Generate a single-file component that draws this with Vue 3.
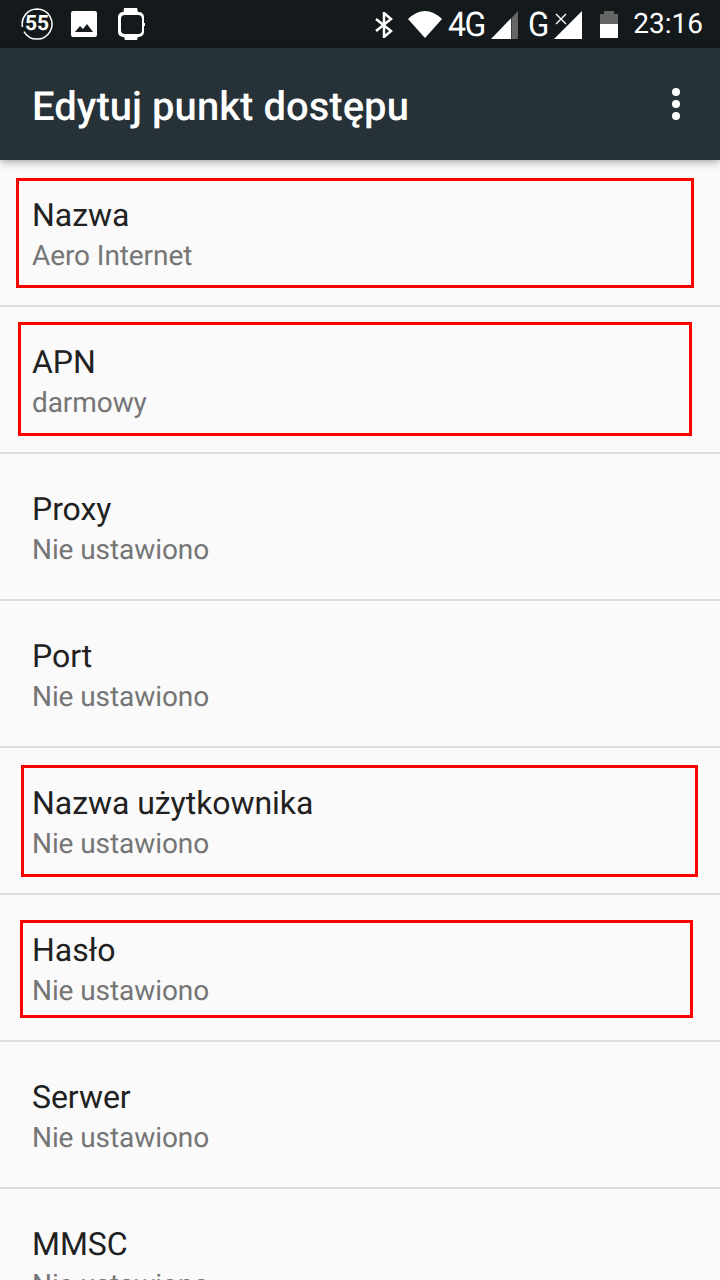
<template>
  <div class="phone">
    <div class="status-bar">
      <div class="status-left">
        <div class="badge-55">
          <svg class="ring" viewBox="0 0 32 32" width="32" height="32">
            <path fill="none" stroke="#fff" stroke-width="1.500" d="M16 1a15 15 0 1 1-13 22.500M1.500 19A15 15 0 0 1 16 1" />
          </svg>
          <span>55</span>
        </div>
        <svg class="ic-pic" viewBox="0 0 26 26" width="26" height="26">
          <path fill="#fff" fill-rule="evenodd" d="M2 0h22a2 2 0 0 1 2 2v22a2 2 0 0 1-2 2H2a2 2 0 0 1-2-2V2a2 2 0 0 1 2-2zM4 21h18l-6-8-4 5-3-3z" />
        </svg>
        <svg class="ic-watch" viewBox="0 0 28 32" width="28" height="32">
          <path fill="#fff" d="M7 0h13l1 4h1a5 5 0 0 1 5 5v6h1v3h-1v6a5 5 0 0 1-5 5h-1l-1 3H8l-1-3H6a5 5 0 0 1-5-5V9a5 5 0 0 1 5-5h.500z" transform="translate(-1 0)" />
          <rect x="3" y="7" width="21" height="19" rx="4" fill="#14191c" />
        </svg>
      </div>
      <div class="status-right">
        <svg class="ic-bt" viewBox="0 0 18 26" width="18" height="26">
          <path fill="none" stroke="#fff" stroke-width="2.500" d="M1 7l15 12-7 6V1l7 6L1 19" />
        </svg>
        <svg class="ic-wifi" viewBox="0 0 34 27" width="34" height="27">
          <path fill="#fff" d="M17 27L0 8Q17-8 34 8z" />
        </svg>
        <span class="net net-4g"><b>4G</b></span>
        <svg class="ic-sig" viewBox="0 0 27 28" width="27" height="28">
          <path fill="#fff" d="M0 28L20 7.300V28z" />
          <path fill="#666" d="M20.500 6.800L27 0v28h-6.500z" />
        </svg>
        <span class="net net-g"><b>G</b></span>
        <svg class="ic-sig2" viewBox="0 0 28 28" width="28" height="28">
          <path fill="#fff" d="M0 28L28 0v28z" />
          <path fill="none" stroke="#fff" stroke-width="1.400" d="M2 3l10 10M12 3L2 13" />
        </svg>
        <svg class="ic-bat" viewBox="0 0 18 27" width="18" height="27">
          <path fill="#666" d="M4 0h10v3h4v10H0V3h4z" />
          <rect y="13" width="18" height="14" fill="#fff" />
        </svg>
        <span class="clock">23:16</span>
      </div>
    </div>

    <header class="app-bar">
      <h1>Edytuj punkt dostępu</h1>
      <div class="more">
        <i></i><i></i><i></i>
      </div>
    </header>

    <div class="list">
      <div v-for="item in items" :key="item.title" class="row">
        <div class="row-title">{{ item.title }}</div>
        <div class="row-value">{{ item.value }}</div>
      </div>
    </div>

    <div v-for="(m, i) in marks" :key="i" class="mark" :style="m"></div>
  </div>
</template>

<script setup>
const items = [
  { title: 'Nazwa', value: 'Aero Internet' },
  { title: 'APN', value: 'darmowy' },
  { title: 'Proxy', value: 'Nie ustawiono' },
  { title: 'Port', value: 'Nie ustawiono' },
  { title: 'Nazwa użytkownika', value: 'Nie ustawiono' },
  { title: 'Hasło', value: 'Nie ustawiono' },
  { title: 'Serwer', value: 'Nie ustawiono' },
  { title: 'MMSC', value: 'Nie ustawiono' }
]

// red annotation boxes drawn over the screenshot
const box = (x, y, w, h) => ({ left: x + 'px', top: y + 'px', width: w + 'px', height: h + 'px' })
const marks = [
  box(16, 178, 678, 110),
  box(18, 322, 674, 114),
  box(21, 765, 677, 112),
  box(20, 920, 673, 98)
]
</script>

<style>
html,
body {
  margin: 0;
  background: #fafafa;
}
</style>

<style scoped>
.phone {
  position: relative;
  width: 720px;
  height: 1280px;
  overflow: hidden;
  background: #fafafa;
  font-family: Roboto, sans-serif;
  text-rendering: geometricPrecision;
}

.status-bar {
  height: 48px;
  background: #14191c;
  display: flex;
  justify-content: space-between;
  align-items: center;
  color: #fff;
}

.status-left {
  display: flex;
  align-items: center;
  padding-left: 21px;
}

.badge-55 {
  position: relative;
  width: 32px;
  height: 32px;
  font-size: 21px;
  font-weight: 700;
  line-height: 33px;
  text-align: center;
}

.ring {
  position: absolute;
  left: 0;
  top: 0;
}

.ic-pic {
  margin-left: 18px;
}

.ic-watch {
  margin-left: 21px;
}

.status-right {
  display: flex;
  align-items: center;
  padding-right: 17px;
}

.status-right svg,
.net {
  flex: none;
  margin-top: 1px;
}

.ic-wifi {
  margin-left: 15px;
}

.net {
  font-size: 34px;
  line-height: 34px;
}

.net b {
  display: block;
  font-weight: 400;
  transform-origin: left center;
  white-space: nowrap;
}

.net-4g {
  width: 38px;
  margin-left: 6px;
}

.net-4g b {
  letter-spacing: -1.5px;
  transform: scaleX(0.94);
}

.net-g {
  width: 19px;
  margin-left: 10px;
}

.net-g b {
  transform: scaleX(0.92);
}

.ic-sig {
  margin-left: 5px;
}

.ic-sig2 {
  margin-left: 7px;
}

.ic-bat {
  margin-left: 18px;
}

.clock {
  margin-left: 15px;
  font-size: 28px;
  line-height: 34px;
}

.app-bar {
  position: relative;
  z-index: 1;
  height: 112px;
  background: #263238;
  display: flex;
  align-items: center;
  justify-content: space-between;
  padding: 0 32px;
  box-sizing: border-box;
  box-shadow: 0 2px 8px rgba(0, 0, 0, 0.35);
  color: #fff;
}

.app-bar h1 {
  margin: 0;
  font-size: 40px;
  font-weight: 500;
  line-height: 48px;
  padding-top: 6px;
  letter-spacing: 0.03px;
}

.more {
  display: flex;
  flex-direction: column;
  gap: 4px;
  margin-right: 8px;
}

.more i {
  width: 8px;
  height: 8px;
  border-radius: 50%;
  background: #fff;
}

.row {
  height: 147px;
  box-sizing: border-box;
  padding: 33px 32px 0;
  border-bottom: 2px solid #dcdcdc;
}

.row-title {
  font-size: 32px;
  line-height: 44px;
  letter-spacing: -0.05px;
  color: #212121;
}

.row-value {
  font-size: 28px;
  line-height: 38px;
  letter-spacing: -0.08px;
  color: #757575;
}

.mark {
  position: absolute;
  z-index: 2;
  box-sizing: border-box;
  border: 3px solid #f00;
}
</style>
